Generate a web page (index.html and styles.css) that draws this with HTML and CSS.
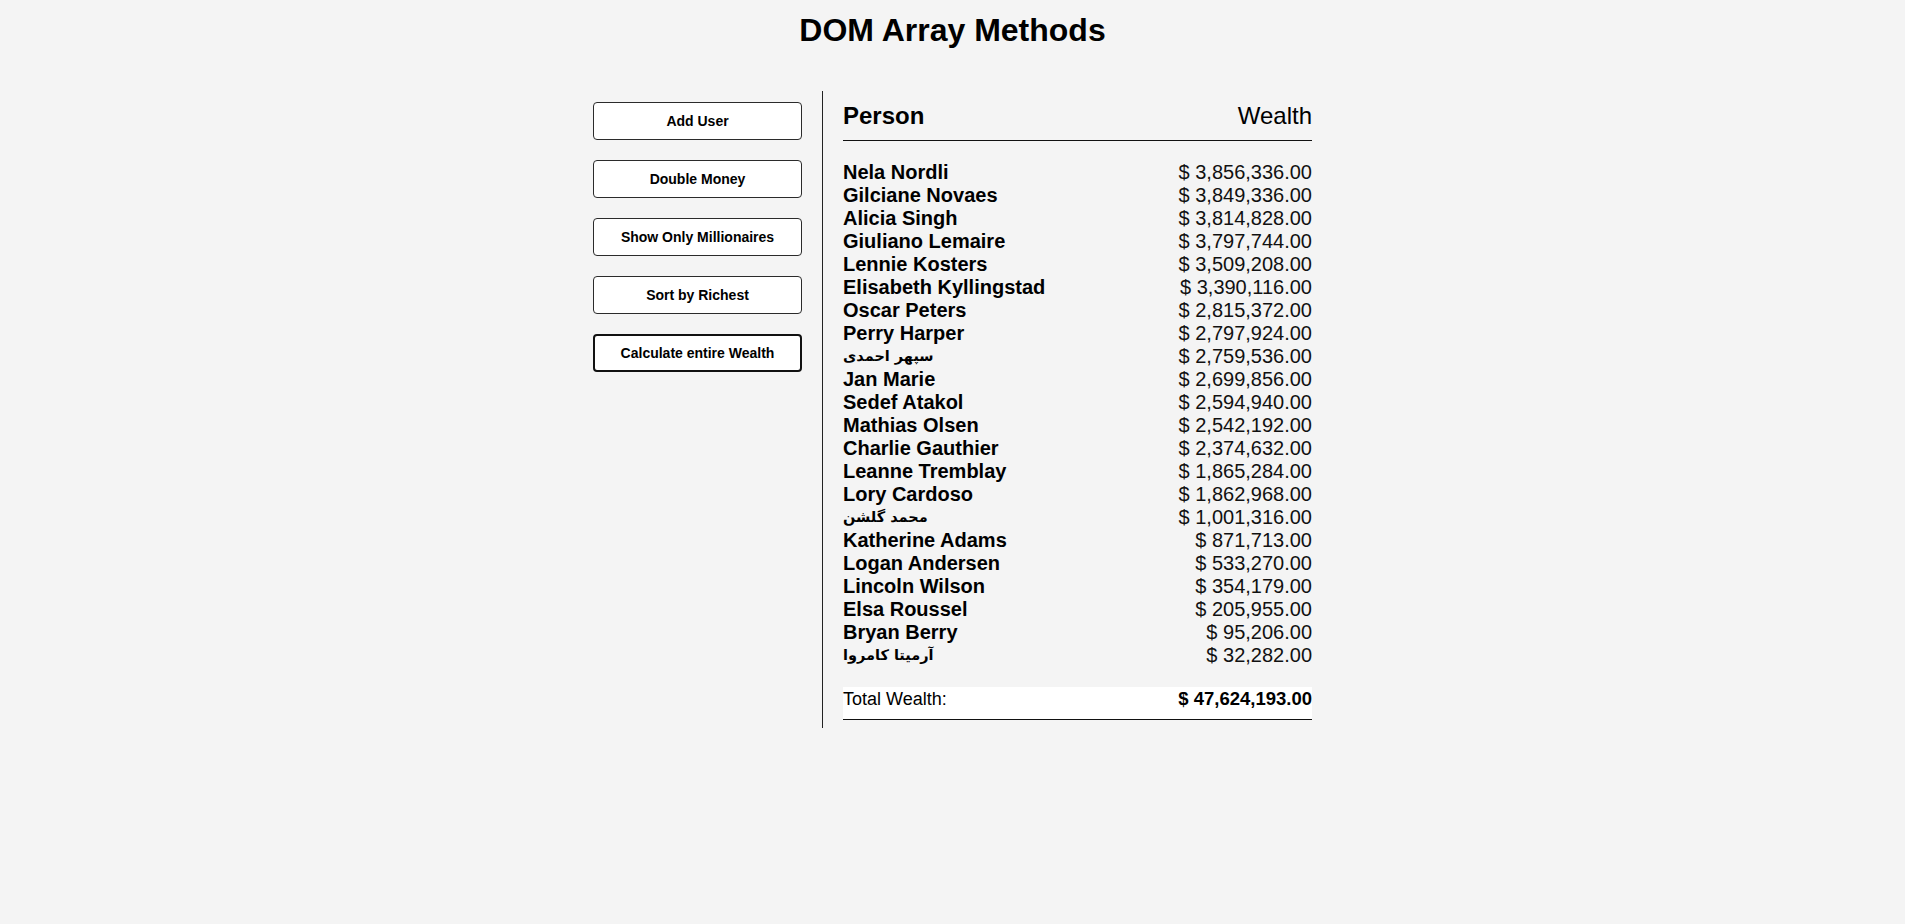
FILE: index.html
```html
<!DOCTYPE html>
<html lang="en">
<head>
<meta charset="utf-8">
<title>DOM Array Methods</title>
<link rel="stylesheet" href="styles.css">
</head>
<body>
  <h1 class="title">DOM Array Methods</h1>
  <div class="container">
    <aside class="sidebar">
      <button class="btn">Add User</button>
      <button class="btn">Double Money</button>
      <button class="btn">Show Only Millionaires</button>
      <button class="btn">Sort by Richest</button>
      <button class="btn btn-active">Calculate entire Wealth</button>
    </aside>
    <main class="main">
      <h2 class="head"><strong>Person</strong> <span class="head-wealth">Wealth</span></h2>
      <div class="list">
        <div class="person"><strong>Nela Nordli</strong><span>$ 3,856,336.00</span></div>
        <div class="person"><strong>Gilciane Novaes</strong><span>$ 3,849,336.00</span></div>
        <div class="person"><strong>Alicia Singh</strong><span>$ 3,814,828.00</span></div>
        <div class="person"><strong>Giuliano Lemaire</strong><span>$ 3,797,744.00</span></div>
        <div class="person"><strong>Lennie Kosters</strong><span>$ 3,509,208.00</span></div>
        <div class="person"><strong>Elisabeth Kyllingstad</strong><span>$ 3,390,116.00</span></div>
        <div class="person"><strong>Oscar Peters</strong><span>$ 2,815,372.00</span></div>
        <div class="person"><strong>Perry Harper</strong><span>$ 2,797,924.00</span></div>
        <div class="person"><strong class="rtl">سپهر احمدی</strong><span>$ 2,759,536.00</span></div>
        <div class="person"><strong>Jan Marie</strong><span>$ 2,699,856.00</span></div>
        <div class="person"><strong>Sedef Atakol</strong><span>$ 2,594,940.00</span></div>
        <div class="person"><strong>Mathias Olsen</strong><span>$ 2,542,192.00</span></div>
        <div class="person"><strong>Charlie Gauthier</strong><span>$ 2,374,632.00</span></div>
        <div class="person"><strong>Leanne Tremblay</strong><span>$ 1,865,284.00</span></div>
        <div class="person"><strong>Lory Cardoso</strong><span>$ 1,862,968.00</span></div>
        <div class="person"><strong class="rtl">محمد گلشن</strong><span>$ 1,001,316.00</span></div>
        <div class="person"><strong>Katherine Adams</strong><span>$ 871,713.00</span></div>
        <div class="person"><strong>Logan Andersen</strong><span>$ 533,270.00</span></div>
        <div class="person"><strong>Lincoln Wilson</strong><span>$ 354,179.00</span></div>
        <div class="person"><strong>Elsa Roussel</strong><span>$ 205,955.00</span></div>
        <div class="person"><strong>Bryan Berry</strong><span>$ 95,206.00</span></div>
        <div class="person"><strong class="rtl">آرمیتا کامروا</strong><span>$ 32,282.00</span></div>
      </div>
      <h3 class="total">Total Wealth: <strong>$ 47,624,193.00</strong></h3>
    </main>
  </div>
</body>
</html>
```
FILE: styles.css
```css
* {
  box-sizing: border-box;
}

body {
  margin: 0;
  background: #f4f4f4;
  color: #000;
  font-family: "Liberation Sans", Arial, "DejaVu Sans", sans-serif;
}

.title {
  margin: 0;
  padding-top: 12px;
  font-size: 32px;
  line-height: 37px;
  font-weight: 700;
  text-align: center;
}

.container {
  display: flex;
  justify-content: center;
  margin-top: 42px;
}

.sidebar {
  width: 209px;
  margin-right: 20px;
  padding-top: 11px;
  display: flex;
  flex-direction: column;
  gap: 20px;
}

.btn {
  display: block;
  width: 100%;
  height: 38px;
  padding: 0;
  background: #fff;
  border: 1px solid #2b2b2b;
  border-radius: 4px;
  font-family: "Liberation Sans", Arial, sans-serif;
  font-size: 14px;
  font-weight: 700;
  color: #000;
  cursor: pointer;
}

.btn-active {
  border: 2px solid #111;
}

.main {
  width: 490px;
  border-left: 1px solid #222;
  padding: 0 0 8px 20px;
}

.head {
  display: flex;
  justify-content: space-between;
  margin: 11px 0 0;
  padding-bottom: 10px;
  border-bottom: 1px solid #111;
  font-size: 24px;
  line-height: 28px;
  font-weight: 400;
}

.head strong {
  font-weight: 700;
}

.list {
  margin-top: 20px;
}

.person {
  display: flex;
  justify-content: space-between;
  font-size: 20px;
  line-height: 23px;
  height: 23px;
}

.person strong {
  font-weight: 700;
}

.person span {
  color: #111;
}

.rtl {
  font-family: "DejaVu Sans", sans-serif;
  font-size: 14.5px;
}

.total {
  display: flex;
  justify-content: space-between;
  align-items: baseline;
  margin: 20px 0 0;
  padding: 1px 0 0;
  height: 33px;
  background: #fff;
  border-bottom: 1px solid #111;
  font-size: 18px;
  line-height: 21px;
  font-weight: 400;
}

.total strong {
  font-weight: 700;
  font-size: 18.5px;
}
```
